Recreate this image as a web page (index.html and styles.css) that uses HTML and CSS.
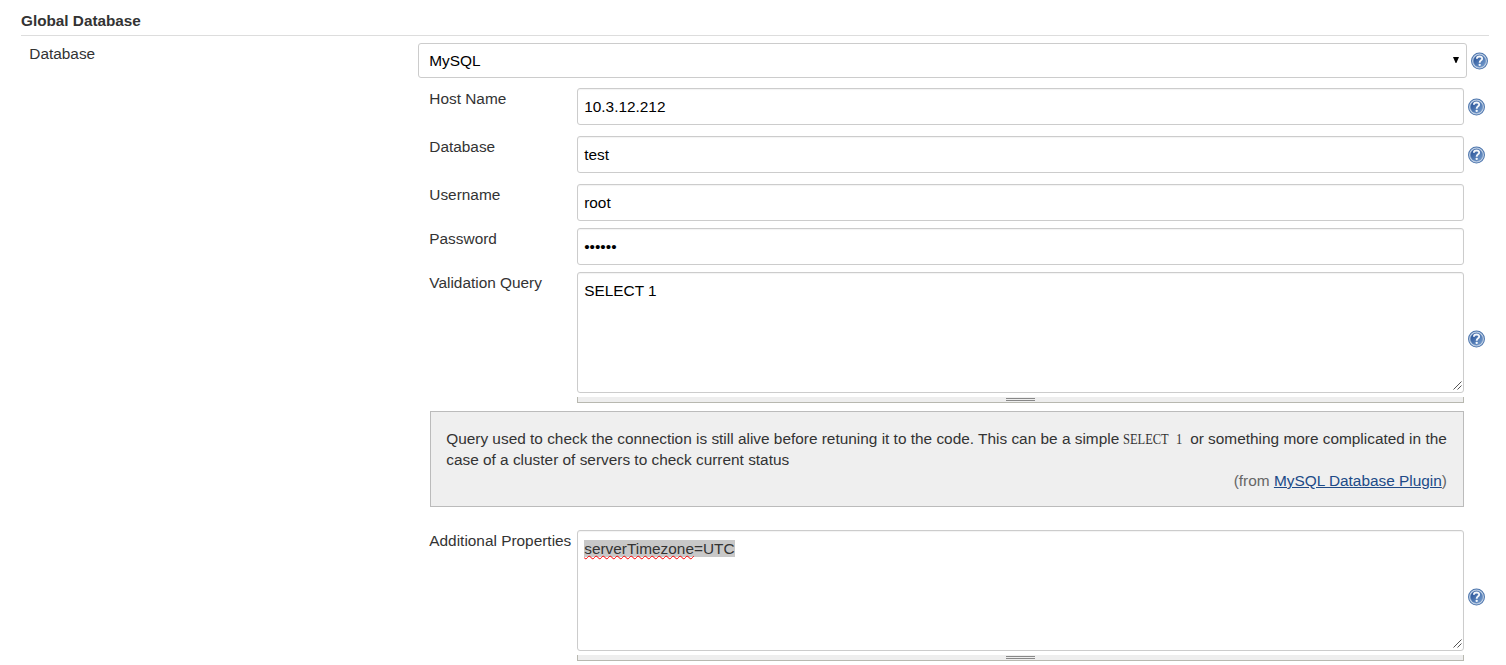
FILE: index.html
```
<!DOCTYPE html>
<html lang="en">
<head>
<meta charset="utf-8">
<title>Global Database</title>
<link rel="stylesheet" href="styles.css">
</head>
<body>
<svg width="0" height="0" class="defs">
  <defs>
    <linearGradient id="disc" x1="0" y1="0" x2="1" y2="1">
      <stop offset="0" stop-color="#1f4990"/><stop offset="1" stop-color="#7ba3d3"/>
    </linearGradient>
    <symbol id="help" viewBox="0 0 18 18">
      <circle cx="9" cy="9" r="8.4" fill="#c6d5e8" stroke="#4b74ac" stroke-width="1.1"/>
      <circle cx="9" cy="9" r="6.5" fill="url(#disc)" stroke="#6287bb" stroke-width=".5"/>
      <path d="M6.2 6.6C6.4 3.4 12 3.5 11.8 6.6C11.7 8.4 9.2 8.3 9.2 10.9" fill="none" stroke="#f4f7fb" stroke-width="2"/>
      <circle cx="9.2" cy="13.1" r="1.25" fill="#f4f7fb"/>
    </symbol>
    <symbol id="grip" viewBox="0 0 9 9">
      <path d="M.5 8.5L8.5.5M4.5 8.5L8.5 4.5" fill="none" stroke="#555" stroke-width="1"/>
    </symbol>
  </defs>
</svg>
<main class="section">
  <h1 class="heading">Global Database</h1>
  <div class="setting">
    <div class="label">Database</div>
    <div class="content">
      <div class="choice">
        <div class="select"><span>MySQL</span><svg class="arrow" viewBox="0 0 6 6"><path d="M0 0H6L3.4 6H2.6Z"/></svg></div>
        <svg class="help"><use href="#help"/></svg>
      </div>
      <div class="fields">
        <div class="row spaced"><div class="label">Host Name</div><div class="input">10.3.12.212</div><svg class="help"><use href="#help"/></svg></div>
        <div class="row spaced"><div class="label">Database</div><div class="input">test</div><svg class="help"><use href="#help"/></svg></div>
        <div class="row"><div class="label">Username</div><div class="input">root</div></div>
        <div class="row"><div class="label">Password</div><div class="input password">••••••</div></div>
        <div class="row area-row"><div class="label">Validation Query</div>
          <div class="area-wrap"><div class="input area">SELECT 1<svg class="grip"><use href="#grip"/></svg></div><div class="handle"><i></i></div></div>
          <svg class="help"><use href="#help"/></svg></div>
        <div class="note">
          <p>Query used to check the connection is still alive before retuning it to the code. This can be a simple <code>SELECT 1</code> or something more complicated in the case of a cluster of servers to check current status</p>
          <p class="from">(from <a>MySQL Database Plugin</a>)</p>
        </div>
        <div class="row area-row"><div class="label">Additional Properties</div>
          <div class="area-wrap"><div class="input area"><span class="selected"><span class="misspelt">serverTimezone</span>=UTC</span><svg class="grip"><use href="#grip"/></svg></div><div class="handle"><i></i></div></div>
          <svg class="help"><use href="#help"/></svg></div>
      </div>
    </div>
  </div>
</main>
</body>
</html>
```
FILE: styles.css
```
* { box-sizing: border-box; }
body { margin: 0; background: #fff; color: #333; font: 15.4px/21px "Liberation Sans", Arial, sans-serif; overflow: hidden; }
.defs { position: absolute; }
.section { padding: 10px 17px 0 21px; }
.heading { margin: 0; height: 26px; font-size: 15.3px; line-height: 21px; font-weight: bold; border-bottom: 1px solid #ddd; }
.setting { display: grid; grid-template-columns: 389px 1fr; padding: 7px 0 0 8px; }
.label { padding-left: .3px; white-space: nowrap; }
.content { min-width: 0; }
.choice { display: flex; align-items: center; gap: 4px; padding-right: 1px; }
.select { flex: 1; height: 35px; border: 1px solid #ccc; border-radius: 3px; color: #000; display: flex; align-items: center; justify-content: space-between; padding: 0 7px 0 10.2px; }
.arrow { width: 6px; height: 6px; margin-bottom: 1px; }
.help { width: 17px; height: 18px; flex: none; }
.fields { padding: 10px 0 0 11px; }
.row { display: grid; grid-template-columns: 148px 887px 17px; column-gap: 0; margin-bottom: 7px; }
.row .help { margin-left: 4px; align-self: center; }
.spaced { margin-bottom: 11px; }
.input { height: 37px; border: 1px solid #ccc; border-radius: 3px; box-shadow: inset 0 1px 1px rgba(0,0,0,.05); color: #000; padding: 7px 6.2px; }
.area { position: relative; height: 121px; }
.grip { position: absolute; right: 1px; bottom: 2px; width: 9px; height: 9px; }
.area-row { margin-bottom: 8px; }
.area-row .help { margin-top: 3px; }
.handle { height: 6px; margin-top: 4px; background: #eee; border: 1px solid #b8b8b0; border-top: 0; display: flex; justify-content: center; }
.handle i { width: 29px; height: 3px; margin-top: 1px; border: solid #888; border-width: 1px 0; }
.note { width: 1034px; height: 96px; margin: 0 0 23px 1px; padding: 16px 16px 0 15.2px; background: #efefef; border: 1px solid #bbb; }
.note p { margin: 0; }
.note code { display: inline-block; width: 62.4px; margin-right: 0; font: 14.5px/14px "Liberation Serif", serif; white-space: nowrap; word-spacing: 5px; transform: scaleX(.86); transform-origin: 0 50%; }
.note .from { text-align: right; color: #666; }
.note a { color: #204a87; text-decoration: underline; }
.selected { display: inline-block; height: 17px; line-height: 17px; background: #c8c8c8; color: #333; }
.misspelt { text-decoration: underline wavy red 1px; text-underline-offset: 1px; text-decoration-skip-ink: none; }
```
